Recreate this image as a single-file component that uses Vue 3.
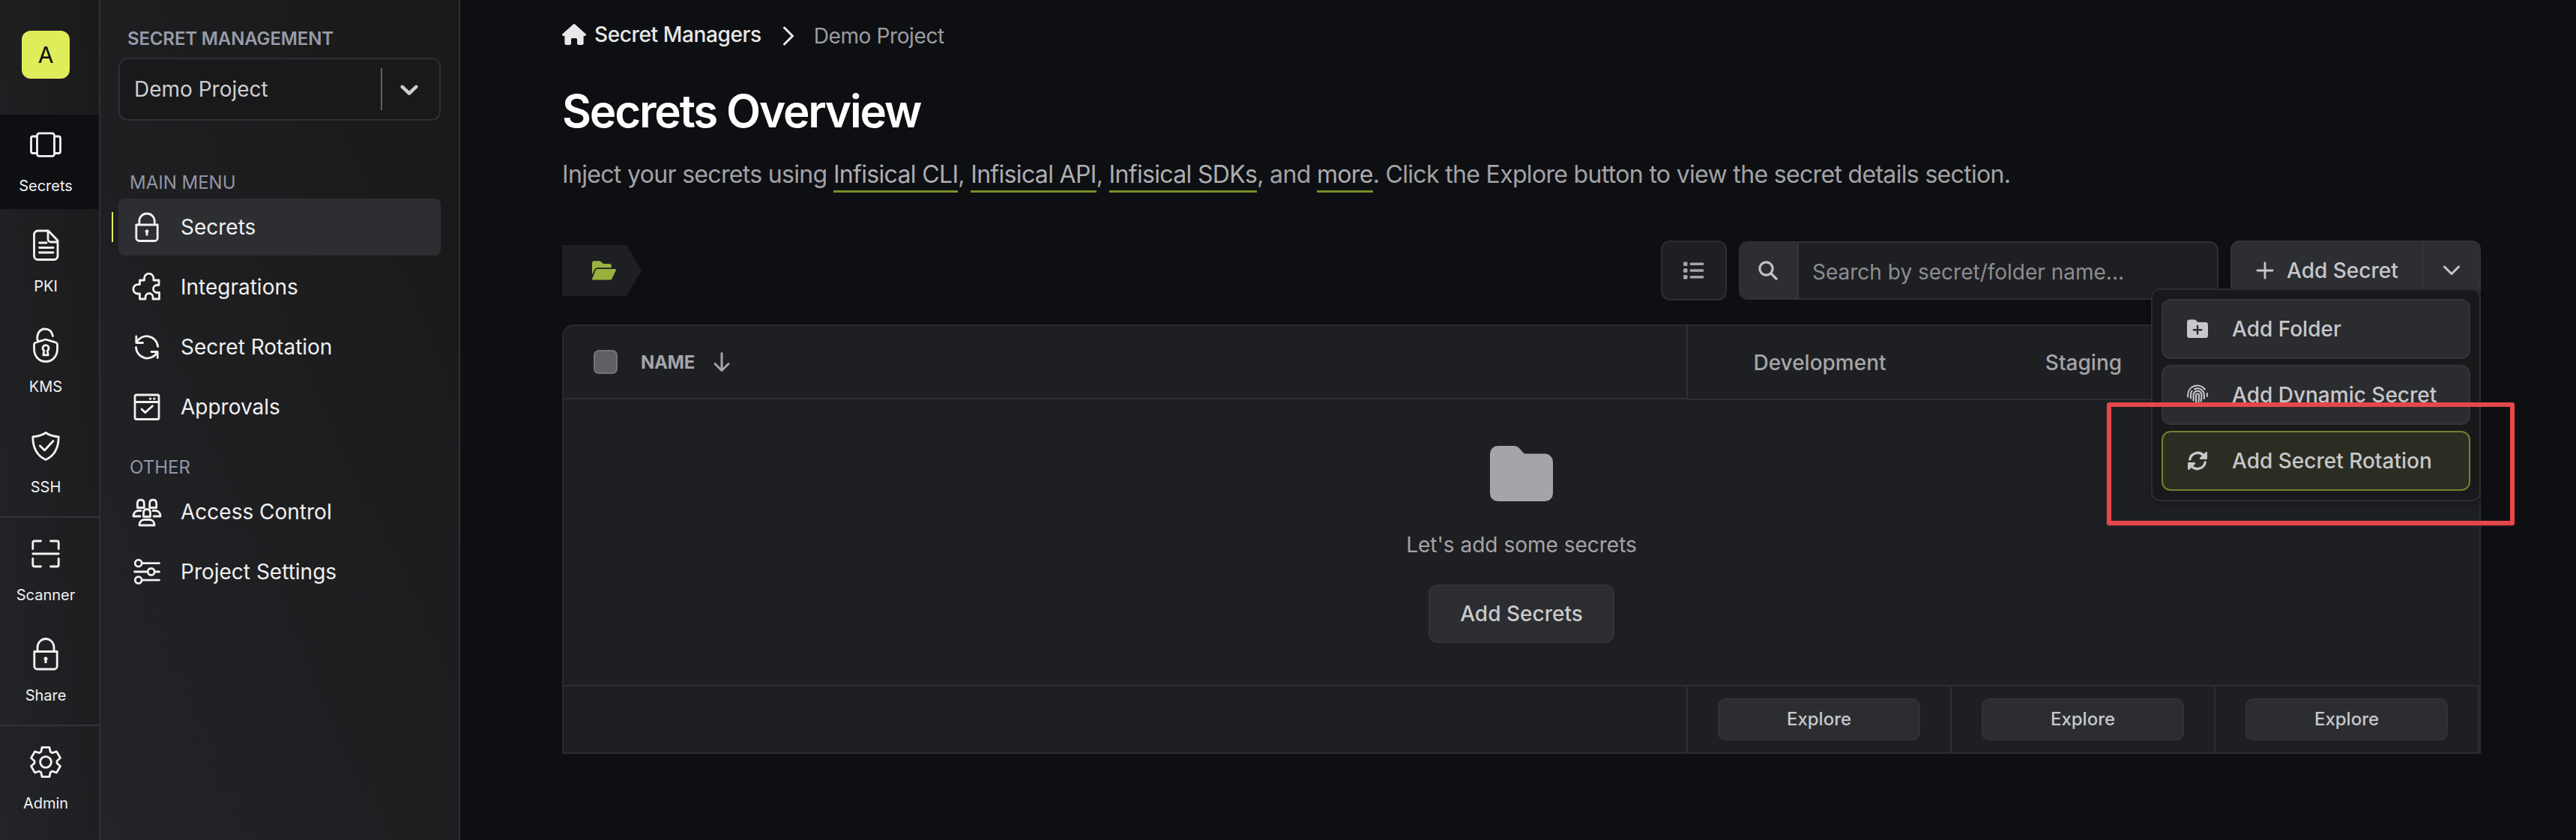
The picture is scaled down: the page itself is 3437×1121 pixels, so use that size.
<script setup>
const gearPath = (() => {
  const tooth = [[-6.2, -13.8], [-5, -19.6], [5, -19.6], [6.2, -13.8]]
  const pts = []
  for (let k = 0; k < 6; k++) {
    const a = (k * Math.PI) / 3
    for (const [x, y] of tooth) {
      pts.push(
        `${(24 + x * Math.cos(a) - y * Math.sin(a)).toFixed(2)} ${(24 + x * Math.sin(a) + y * Math.cos(a)).toFixed(2)}`
      )
    }
  }
  return `M${pts.join('L')}Z M24 16.6a7.4 7.4 0 1 0 0 14.8a7.4 7.4 0 1 0 0-14.8Z`
})()

const rail = [
  [
    {
      label: 'Secrets',
      active: true,
      d: 'M15.5 8.8h17a3 3 0 0 1 3 3v24.6a3 3 0 0 1-3 3h-17a3 3 0 0 1-3-3V11.8a3 3 0 0 1 3-3ZM12.5 13H7a2.500 2.500 0 0 0-2.500 2.500v17.500A2.500 2.500 0 0 0 7 35.500h5.500M35.500 13H41a2.500 2.500 0 0 1 2.500 2.500v17.500a2.500 2.500 0 0 1-2.500 2.500h-5.500'
    },
    {
      label: 'PKI',
      d: 'M13.500 5H27.500L40 18V38.500a5 5 0 0 1-5 5H13.500a5 5 0 0 1-5-5V10a5 5 0 0 1 5-5ZM27 5V16a4 4 0 0 0 4 4H40M15.500 21h9.500M15.500 27.500H34M15.500 34H34'
    },
    {
      label: 'KMS',
      d: 'M24 16c-4.500 1.500-9.500 2.600-13.800 4.200-1 .4-1.700 1.200-1.700 2.300V28.500c0 10 6.500 17 15.500 17s15.500-7 15.500-17v-6c0-1.100-.7-1.900-1.700-2.300C33.500 18.600 28.500 17.500 24 16ZM13.500 18.500c-2.500-8 1.500-16.500 9.500-16.500 6 0 9.500 4 10.500 9.500M21.800 31l-1 5.800h6.400l-1-5.800a4 4 0 1 0-4.400 0Z'
    },
    {
      label: 'SSH',
      d: 'M24 6.500C19 10 13 11.500 6.800 12 6.800 26 12 37 24 42.500 36 37 41.200 26 41.200 12 35 11.500 29 10 24 6.500ZM16.400 24l6 6L34 17.500'
    }
  ],
  [
    {
      label: 'Scanner',
      d: 'M6.800 17.500V9a2 2 0 0 1 2-2H17.500M30.500 7H39.200a2 2 0 0 1 2 2v8.500M41.200 30.500V39a2 2 0 0 1-2 2H30.500M17.500 41H8.800a2 2 0 0 1-2-2V30.500M6.800 24H41.200'
    },
    {
      label: 'Share',
      d: 'M8.800 20.500H39.200V40a4 4 0 0 1-4 4H12.800a4 4 0 0 1-4-4ZM13 20.500V15a11 11.500 0 0 1 22 0V20.500',
      solid: 'M24 27.500a2.600 2.600 0 0 1 1.500 4.700V36h-3V32.200A2.600 2.600 0 0 1 24 27.500Z'
    }
  ],
  [{ label: 'Admin', d: gearPath }]
]

const menus = [
  {
    title: 'MAIN MENU',
    items: [
      {
        label: 'Secrets',
        active: true,
        d: 'M5.800 17H34.200V34.500a4 4 0 0 1-4 4H9.800a4 4 0 0 1-4-4ZM9.800 17V12a10.200 10 0 0 1 20.400 0V17',
        solid: 'M20 23.200a2.500 2.500 0 0 1 1.400 4.500V31.500h-2.800V27.700A2.500 2.500 0 0 1 20 23.200Z'
      },
      {
        label: 'Integrations',
        d: 'M10.500 11H16.500V8.300a6.200 6.200 0 0 1 12.400 0V11H36V17.500H33.500a5 5 0 0 0 0 10H36.500V36H28V33.500a5 5 0 0 0-10 0V36H10.500V29H8a6.200 6.200 0 0 1 0-12.400H10.500Z'
      },
      {
        label: 'Secret Rotation',
        d: 'M5.800 6V14.500H14.500M6.500 13.500A15 15 0 0 1 34.600 19.500M34.200 34.500V26.500H26M33.500 27.500A15 15 0 0 1 5.500 20.500'
      },
      {
        label: 'Approvals',
        d: 'M6 4H34a2 2 0 0 1 2 2V34.500a2 2 0 0 1-2 2H6a2 2 0 0 1-2-2V6a2 2 0 0 1 2-2ZM4 13.500H36M13 23l4.600 4.600L27.500 18.800',
        solid: 'M23 7.800h3v2.600h-3ZM28.300 7.800h3v2.600h-3Z'
      }
    ]
  },
  {
    title: 'OTHER',
    items: [
      {
        label: 'Access Control',
        d: 'M11.800 4c3 0 4.500 2 4.500 5v5.500H7.300V9c0-3 1.500-5 4.500-5ZM28.200 4c3 0 4.500 2 4.500 5v5.500H23.700V9c0-3 1.500-5 4.500-5ZM20 16.500c3 0 4.500 2 4.500 5v5H15.500v-5c0-3 1.500-5 4.500-5ZM12 18.500H8.500c-4 0-6.500 3-6.500 7.500H11M28 18.500h3.500c4 0 6.500 3 6.500 7.500H29M16.500 30.500h7c4 0 6.500 3 6.500 7.500H10c0-4.500 2.500-7.500 6.500-7.500Z'
      },
      {
        label: 'Project Settings',
        d: 'M8.700 4.200a4.500 4.500 0 1 0 0 9a4.500 4.500 0 1 0 0-9ZM13.200 8.700H36.500M25.700 15.500a4.500 4.500 0 1 0 0 9a4.500 4.500 0 1 0 0-9ZM3.500 20H21.200M30.200 20H36.500M8.700 26.600a4.500 4.500 0 1 0 0 9a4.500 4.500 0 1 0 0-9ZM13.200 31.100H36.500'
      }
    ]
  }
]

const environments = ['Development', 'Staging', 'Production']
const actions = ['Add Folder', 'Add Dynamic Secret', 'Add Secret Rotation']
</script>

<template>
  <div class="app">
    <nav class="rail">
      <div class="logo">A</div>
      <div v-for="(group, g) in rail" :key="g" class="rail-group">
        <div v-for="item in group" :key="item.label" class="rail-item" :class="{ active: item.active }">
          <svg width="48" height="48" viewBox="0 0 48 48">
            <path :d="item.d" class="line" />
            <path v-if="item.solid" :d="item.solid" fill="currentColor" />
          </svg>
          <span>{{ item.label }}</span>
        </div>
      </div>
    </nav>

    <aside class="sidebar">
      <div class="product">SECRET MANAGEMENT</div>
      <div class="select">
        <span class="select-value">Demo Project</span>
        <i class="select-sep"></i>
        <svg width="40" height="40" viewBox="0 0 20 20">
          <path
            fill="currentColor"
            d="M4.516 7.548c0.436-0.446 1.043-0.481 1.576 0l3.908 3.747 3.908-3.747c0.533-0.481 1.141-0.446 1.574 0 0.436 0.445 0.408 1.197 0 1.615-0.406 0.418-4.695 4.502-4.695 4.502-0.217 0.223-0.502 0.335-0.787 0.335s-0.570-0.112-0.789-0.335c0 0-4.287-4.084-4.695-4.502s-0.436-1.170 0-1.615z"
          />
        </svg>
      </div>
      <section v-for="menu in menus" :key="menu.title" class="menu">
        <h2>{{ menu.title }}</h2>
        <a v-for="item in menu.items" :key="item.label" class="menu-item" :class="{ active: item.active }">
          <svg width="40" height="40" viewBox="0 0 40 40">
            <path :d="item.d" class="line" />
            <path v-if="item.solid" :d="item.solid" fill="currentColor" />
          </svg>
          <span>{{ item.label }}</span>
        </a>
      </section>
    </aside>

    <main class="main">
      <div class="crumbs">
        <svg class="home" width="32" height="28" viewBox="0 0 32 28">
          <path
            fill="currentColor"
            d="M14.800.5a1.800 1.800 0 0 1 2.400 0L31.500 13.200c1 .9.400 2.800-1 2.800H28.600V25.500a2.500 2.500 0 0 1-2.500 2.500H22a2 2 0 0 1-2-2V20.500a1.500 1.500 0 0 0-1.500-1.500h-5A1.500 1.500 0 0 0 12 20.500V26a2 2 0 0 1-2 2H5.900a2.500 2.500 0 0 1-2.500-2.500V16H1.500C.100 16-.5 14.100.500 13.200Z"
          />
        </svg>
        <span class="crumb-root">Secret Managers</span>
        <svg class="crumb-sep" width="16" height="26" viewBox="0 0 16 26">
          <path d="M2.500 2L13.500 13L2.500 24" fill="none" stroke="currentColor" stroke-width="3" stroke-linecap="round" stroke-linejoin="round" />
        </svg>
        <span class="crumb-leaf">Demo Project</span>
      </div>

      <h1>Secrets Overview</h1>
      <p class="lead">
        Inject your secrets using <a>Infisical CLI</a>, <a>Infisical API</a>, <a>Infisical SDKs</a>, and
        <a>more</a>. Click the Explore button to view the secret details section.
      </p>

      <div class="toolbar">
        <div class="path">
          <svg width="32" height="26" viewBox="0 0 32 26">
            <path
              fill="currentColor"
              d="M0 3.500A3.200 3.200 0 0 1 3.200.3H9.600a3.200 3.200 0 0 1 2.300 1l1.800 1.800a3.200 3.200 0 0 0 2.300 1h6.600a3.200 3.200 0 0 1 3.200 3.200V9.300H7.200A4 4 0 0 0 3.700 11.300L0 18.500ZM4.900 12.200A2.400 2.400 0 0 1 7 11H30.700a1.200 1.200 0 0 1 1.100 1.800L26.300 24.300A2.400 2.400 0 0 1 24.200 25.600H1.300A1.200 1.200 0 0 1 .200 23.800Z"
            />
          </svg>
        </div>
        <button class="list-btn">
          <svg width="28" height="24" viewBox="0 0 28 24" fill="currentColor">
            <rect x="0" y="0.500" width="5.500" height="5.500" rx="1.300" />
            <rect x="0" y="9.200" width="5.500" height="5.500" rx="1.300" />
            <rect x="0" y="18" width="5.500" height="5.500" rx="1.300" />
            <rect x="8.500" y="1.500" width="19" height="3.500" rx="1.750" />
            <rect x="8.500" y="10.200" width="19" height="3.500" rx="1.750" />
            <rect x="8.500" y="19" width="19" height="3.500" rx="1.750" />
          </svg>
        </button>
        <div class="search">
          <div class="search-icon">
            <svg width="26" height="26" viewBox="0 0 26 26" fill="none" stroke="currentColor" stroke-width="3.200" stroke-linecap="round">
              <circle cx="10.500" cy="10.500" r="8.600" />
              <path d="M17 17L24 24" />
            </svg>
          </div>
          <span>Search by secret/folder name...</span>
        </div>
        <div class="add">
          <button class="add-main">
            <svg width="24" height="24" viewBox="0 0 24 24">
              <path d="M12 2V22M2 12H22" stroke="currentColor" stroke-width="2.800" stroke-linecap="round" />
            </svg>
            <span>Add Secret</span>
          </button>
          <button class="add-caret">
            <svg width="24" height="14" viewBox="0 0 24 14">
              <path d="M2.500 2L12 11.500L21.500 2" fill="none" stroke="currentColor" stroke-width="3" stroke-linecap="round" stroke-linejoin="round" />
            </svg>
          </button>
          <div class="dropdown">
            <div v-for="(action, i) in actions" :key="action" class="action" :class="{ hover: i === 2 }">
              <svg v-if="i === 0" width="28" height="28" viewBox="0 0 28 28">
                <path
                  fill="currentColor"
                  d="M3.500 1.500H9.500a3.500 3.500 0 0 1 2.600 1.100l1.800 1.900a2 2 0 0 0 1.400.6H24.500A3.500 3.500 0 0 1 28 8.600V22.500a3.500 3.500 0 0 1-3.500 3.500H3.500A3.500 3.500 0 0 1 0 22.500V5A3.500 3.500 0 0 1 3.500 1.500Z"
                />
                <path d="M14 10V20.500M8.800 15.200H19.200" stroke="#2b2c30" stroke-width="2.400" stroke-linecap="round" />
              </svg>
              <svg v-else-if="i === 1" width="28" height="28" viewBox="0 0 28 28" fill="none" stroke="currentColor" stroke-width="2.100" stroke-linecap="round">
                <path d="M1.200 16.500V13.500A12.600 12.600 0 0 1 23.800 6.500" />
                <path d="M26.800 12V16" />
                <path d="M5 18.500V13.500c0-2 .6-3.600 1.600-5" />
                <path d="M10 6.300A8.800 8.800 0 0 1 22.800 13.800V19" />
                <path d="M8.600 21.500V14a5.400 5.400 0 0 1 10.800 0c0 3-.2 5.500-.8 8.500" />
                <path d="M12 24.500V14.500a2 2 0 0 1 4 0c0 4-.2 7-.8 10.500" />
              </svg>
              <svg v-else width="28" height="28" viewBox="0 0 28 28">
                <path d="M3.800 12A10.600 10.600 0 0 1 22 6.800M24.200 16A10.600 10.600 0 0 1 6 21.200" fill="none" stroke="currentColor" stroke-width="3.400" stroke-linecap="round" />
                <path fill="currentColor" d="M27 3.200V10.800a1.200 1.200 0 0 1-1.200 1.200H18.200c-1.200 0-1.700-1.400-.9-2.200L24.900 2.300c.8-.8 2.100-.2 2.100.9ZM1 24.800V17.200A1.200 1.200 0 0 1 2.200 16H9.800c1.200 0 1.700 1.400.9 2.200L3.100 25.700c-.8.8-2.100.2-2.100-.9Z" />
              </svg>
              <span>{{ action }}</span>
            </div>
          </div>
        </div>
      </div>

      <div class="table">
        <div class="thead">
          <div class="th-name">
            <i class="checkbox"></i>
            <span>NAME</span>
            <svg width="22" height="26" viewBox="0 0 22 26">
              <path d="M11 1.500V24M2 15.500L11 24.500L20 15.500" fill="none" stroke="currentColor" stroke-width="3" stroke-linecap="round" stroke-linejoin="round" />
            </svg>
          </div>
          <div v-for="env in environments" :key="env" class="th-env">{{ env }}</div>
        </div>
        <div class="empty">
          <svg width="84" height="74" viewBox="0 0 84 74">
            <path
              fill="currentColor"
              d="M10.500 0H31.500a10.500 10.500 0 0 1 8 3.600l5 5.700a4 4 0 0 0 3 1.300H73.500A10.500 10.500 0 0 1 84 21.100V63.500A10.500 10.500 0 0 1 73.500 74H10.500A10.500 10.500 0 0 1 0 63.500V10.500A10.500 10.500 0 0 1 10.500 0Z"
            />
          </svg>
          <p>Let's add some secrets</p>
          <button>Add Secrets</button>
        </div>
        <div class="tfoot">
          <div class="tf-name"></div>
          <div v-for="env in environments" :key="env" class="tf-env"><button>Explore</button></div>
        </div>
      </div>
    </main>

    <div class="highlight"></div>
  </div>
</template>

<style>
body {
  margin: 0;
  background: #0e0f13;
}
</style>

<style scoped>
* {
  box-sizing: border-box;
}
.app {
  position: relative;
  display: flex;
  width: 3437px;
  height: 1121px;
  overflow: hidden;
  background: #0e0f13;
  color: #ebebeb;
  font-family: Inter, 'Liberation Sans', sans-serif;
  font-size: 28px;
  line-height: 40px;
}
svg {
  display: block;
  flex: none;
}
button {
  margin: 0;
  padding: 0;
  font: inherit;
  color: inherit;
}
.line {
  fill: none;
  stroke: currentColor;
  stroke-width: 2.8;
  stroke-linecap: round;
  stroke-linejoin: round;
}

.rail {
  width: 134px;
  border-right: 2px solid #2d2f33;
  background: linear-gradient(to top right, #232428, #1a1a1b);
  flex: none;
}
.logo {
  width: 64px;
  height: 64px;
  margin: 41px 0 48px 29px;
  border-radius: 12px;
  background: #e0ed5b;
  color: #0b0b0b;
  font-size: 30px;
  line-height: 64px;
  text-align: center;
}
.rail-group {
  display: flex;
  flex-direction: column;
  gap: 8px;
}
.rail-group + .rail-group {
  margin-top: 8px;
  padding-top: 8px;
  border-top: 2px solid #323439;
}
.rail-item {
  height: 126px;
  padding: 16px 10px 0 0;
  display: flex;
  flex-direction: column;
  align-items: center;
  gap: 17px;
  font-size: 20px;
  line-height: 28px;
  color: #f2f2f2;
}
.rail-item.active {
  background: #0e0f13;
}

.sidebar {
  width: 480px;
  flex: none;
  padding: 32px 24px 0;
  border-right: 2px solid #2d2f33;
  background: linear-gradient(to top right, #232428, #1a1a1b 85%);
}
.product {
  padding-left: 12px;
  height: 45px;
  font-size: 24px;
  font-weight: 600;
  letter-spacing: -0.15px;
  color: #979ba8;
}
.select {
  display: flex;
  align-items: center;
  height: 84px;
  padding: 0 20px 0 19px;
  border: 2px solid #2d2f33;
  border-radius: 12px;
  background: #19191b;
  color: #cdced0;
}
.select-value {
  flex: 1;
  margin-top: -1px;
}
.select-sep {
  width: 2px;
  height: 56px;
  margin-right: 16px;
  background: #606165;
}
.menu {
  display: flex;
  flex-direction: column;
  gap: 4px;
}
.menu h2 {
  margin: 0;
  padding: 1px 15px 0;
  height: 38px;
  font-size: 24px;
  font-weight: 400;
  color: #9296a4;
}
.menu:nth-of-type(1) {
  margin-top: 62px;
}
.menu:nth-of-type(2) {
  margin-top: 22px;
}
.menu-item {
  position: relative;
  display: flex;
  align-items: center;
  gap: 25px;
  height: 76px;
  padding-left: 18px;
  border-radius: 8px;
  color: #f0f0f0;
}
.menu-item.active {
  background: #2d2e32;
}
.menu-item.active::before {
  content: '';
  position: absolute;
  left: -9px;
  top: 18px;
  width: 2px;
  height: 40px;
  background: #e0ed5b;
}

.main {
  flex: none;
  width: 2560px;
  margin-left: 136px;
}
.crumbs {
  display: flex;
  align-items: flex-start;
  height: 68px;
  padding-top: 26px;
}
.home {
  margin: 6px 11px 0 0;
  color: #e8e8e8;
}
.crumb-root {
  font-weight: 500;
  letter-spacing: -0.38px;
  color: #e8e8e8;
}
.crumb-sep {
  margin: 9px 26px 0 28px;
}
.crumb-leaf {
  margin-top: 2px;
  letter-spacing: -0.38px;
  color: #9c9da0;
}
h1 {
  margin: 44px 0 0;
  font-size: 60px;
  line-height: 72px;
  font-weight: 600;
  letter-spacing: -2.15px;
  color: #fff;
}
.lead {
  margin: 29px 0 0;
  font-size: 32px;
  line-height: 40px;
  letter-spacing: -0.67px;
  color: #a2a3a5;
  white-space: nowrap;
}
.lead a {
  padding-bottom: 2px;
  border-bottom: 3px solid #7a8e2e;
  color: #adaeb0;
}

.toolbar {
  display: flex;
  align-items: flex-start;
  height: 112px;
  margin-top: 68px;
}
.path {
  display: flex;
  align-items: center;
  width: 106px;
  height: 68px;
  margin: 6px auto 0 0;
  padding-left: 40px;
  background: #1e1f22;
  color: #9bb13f;
  clip-path: polygon(0 0, 86px 0, 106px 50%, 86px 100%, 0 100%);
}
.list-btn {
  display: flex;
  align-items: center;
  justify-content: center;
  width: 88px;
  height: 80px;
  border: 2px solid #2d2e32;
  border-radius: 12px;
  background: #1e1f22;
  color: #a4a5a8;
}
.search {
  display: flex;
  width: 640px;
  height: 78px;
  margin: 1px 16px 0;
  border: 2px solid #2f3034;
  border-radius: 12px;
  background: #1e1f22;
  overflow: hidden;
}
.search-icon {
  display: flex;
  align-items: center;
  width: 78px;
  padding-left: 24px;
  border-right: 2px solid #34353a;
  background: #2d2e32;
  color: #c2c3c6;
}
.search span {
  padding: 19px 0 0 18px;
  color: #8c8d90;
}
.add {
  position: relative;
  display: flex;
  width: 334px;
  height: 80px;
  color: #c6c7ca;
}
.add button {
  display: flex;
  align-items: center;
  border: 2px solid #323338;
  background: #2d2e32;
}
.add .add-main {
  width: 258px;
  padding-left: 32px;
  gap: 17px;
  font-weight: 500;
  border-radius: 12px 0 0 12px;
}
.add-main span {
  margin-top: -1px;
}
.add .add-caret {
  width: 76px;
  justify-content: center;
  border-left: 0;
  border-radius: 0 12px 12px 0;
}
.dropdown {
  position: absolute;
  z-index: 2;
  right: 0;
  top: 64px;
  display: flex;
  flex-direction: column;
  gap: 8px;
  width: 440px;
  height: 284px;
  padding: 12px;
  border: 2px solid #2c2d31;
  border-radius: 12px;
  background: #19191b;
  box-shadow: 0 4px 8px rgba(0, 0, 0, 0.2);
}
.action {
  display: flex;
  align-items: center;
  gap: 32px;
  height: 80px;
  padding-left: 32px;
  border: 2px solid #333439;
  border-radius: 12px;
  background: #2b2c30;
  font-weight: 500;
}
.action span {
  margin-top: -1px;
}
.action.hover {
  border-color: #777e30;
  background: #2c2d22;
}

.table {
  height: 573px;
  border: 2px solid #2a2b2f;
  border-radius: 16px 0 0 0;
  background: #1e1f22;
  color: #a4a5a8;
}
.thead {
  display: flex;
  height: 98px;
}
.th-name {
  display: flex;
  align-items: center;
  width: 1500px;
  height: 98px;
  padding-left: 40px;
  border-right: 2px solid #2d2e32;
  border-bottom: 2px solid #2d2e32;
  font-size: 24px;
  font-weight: 700;
  letter-spacing: -0.3px;
}
.th-name span {
  margin: 1px 25px 0 31px;
}
.checkbox {
  width: 32px;
  height: 32px;
  border: 2px solid #747579;
  border-radius: 7px;
  background: #5f6064;
}
.th-env {
  width: 352px;
  height: 99px;
  padding-top: 29px;
  border-bottom: 2px solid #2d2e32;
  font-weight: 500;
  text-align: center;
}
.empty {
  display: flex;
  flex-direction: column;
  align-items: center;
  height: 381px;
  padding-top: 62px;
}
.empty p {
  margin: 38px 0 33px;
}
.empty button {
  width: 248px;
  height: 78px;
  border: 2px solid #323338;
  border-radius: 12px;
  background: #2c2d31;
  color: #c9cacc;
  font-weight: 500;
}
.tfoot {
  display: flex;
  height: 90px;
  border-top: 2px solid #2d2e32;
}
.tf-name {
  width: 1500px;
  border-right: 2px solid #2d2e32;
}
.tf-env {
  width: 352px;
  padding: 16px 0 0 40px;
  border-right: 2px solid #2d2e32;
}
.tf-env button {
  display: block;
  width: 270px;
  height: 56px;
  border: 2px solid #323338;
  border-radius: 10px;
  background: #2c2d31;
  color: #c6c7ca;
  font-size: 24px;
  line-height: 48px;
  font-weight: 500;
}

.highlight {
  position: absolute;
  z-index: 3;
  left: 2811px;
  top: 537px;
  width: 544px;
  height: 164px;
  border: 6px solid #e5484b;
  border-radius: 3px;
  box-shadow: 0 1px 2px rgba(229, 72, 75, 0.35);
}
</style>
